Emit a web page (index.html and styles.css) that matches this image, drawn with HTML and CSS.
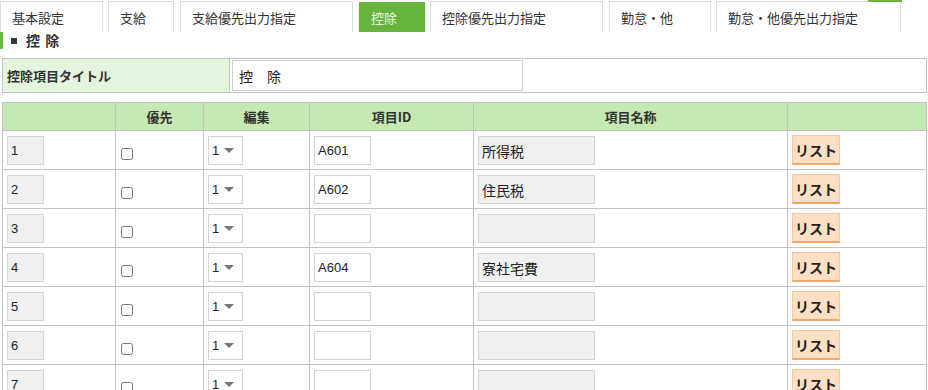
FILE: index.html
```html
<!DOCTYPE html>
<html lang="ja">
<head>
  <meta charset="UTF-8">
  <title>控除</title>
  <link rel="stylesheet" href="styles.css">
</head>
<body>
  <div class="topmark"></div>
  <ul class="tabs">
    <li class="tab t1">基本設定</li>
    <li class="tab t2">支給</li>
    <li class="tab t3">支給優先出力指定</li>
    <li class="tab t4 active">控除</li>
    <li class="tab t5">控除優先出力指定</li>
    <li class="tab t6">勤怠・他</li>
    <li class="tab t7">勤怠・他優先出力指定</li>
  </ul>

  <h2 class="section-title"><span class="square"></span>控 除</h2>

  <table class="title-table">
    <tr>
      <th>控除項目タイトル</th>
      <td><input class="title-input" type="text" value="控　除"></td>
    </tr>
  </table>

  <table class="items">
    <thead>
      <tr>
        <th class="c-no"></th>
        <th class="c-pri">優先</th>
        <th class="c-edit">編集</th>
        <th class="c-id">項目ID</th>
        <th class="c-name">項目名称</th>
        <th class="c-btn"></th>
      </tr>
    </thead>
    <tbody>
      <tr>
        <td><input class="no" type="text" value="1" readonly></td>
        <td><input class="chk" type="checkbox"></td>
        <td><div class="sel"><span>1</span><span class="caret"></span></div></td>
        <td><input class="item-id" type="text" value="A601"></td>
        <td><input class="item-name" type="text" value="所得税" readonly></td>
        <td><button class="btn-list">リスト</button></td>
      </tr>
      <tr>
        <td><input class="no" type="text" value="2" readonly></td>
        <td><input class="chk" type="checkbox"></td>
        <td><div class="sel"><span>1</span><span class="caret"></span></div></td>
        <td><input class="item-id" type="text" value="A602"></td>
        <td><input class="item-name" type="text" value="住民税" readonly></td>
        <td><button class="btn-list">リスト</button></td>
      </tr>
      <tr>
        <td><input class="no" type="text" value="3" readonly></td>
        <td><input class="chk" type="checkbox"></td>
        <td><div class="sel"><span>1</span><span class="caret"></span></div></td>
        <td><input class="item-id" type="text" value=""></td>
        <td><input class="item-name" type="text" value="" readonly></td>
        <td><button class="btn-list">リスト</button></td>
      </tr>
      <tr>
        <td><input class="no" type="text" value="4" readonly></td>
        <td><input class="chk" type="checkbox"></td>
        <td><div class="sel"><span>1</span><span class="caret"></span></div></td>
        <td><input class="item-id" type="text" value="A604"></td>
        <td><input class="item-name" type="text" value="寮社宅費" readonly></td>
        <td><button class="btn-list">リスト</button></td>
      </tr>
      <tr>
        <td><input class="no" type="text" value="5" readonly></td>
        <td><input class="chk" type="checkbox"></td>
        <td><div class="sel"><span>1</span><span class="caret"></span></div></td>
        <td><input class="item-id" type="text" value=""></td>
        <td><input class="item-name" type="text" value="" readonly></td>
        <td><button class="btn-list">リスト</button></td>
      </tr>
      <tr>
        <td><input class="no" type="text" value="6" readonly></td>
        <td><input class="chk" type="checkbox"></td>
        <td><div class="sel"><span>1</span><span class="caret"></span></div></td>
        <td><input class="item-id" type="text" value=""></td>
        <td><input class="item-name" type="text" value="" readonly></td>
        <td><button class="btn-list">リスト</button></td>
      </tr>
      <tr>
        <td><input class="no" type="text" value="7" readonly></td>
        <td><input class="chk" type="checkbox"></td>
        <td><div class="sel"><span>1</span><span class="caret"></span></div></td>
        <td><input class="item-id" type="text" value=""></td>
        <td><input class="item-name" type="text" value="" readonly></td>
        <td><button class="btn-list">リスト</button></td>
      </tr>
    </tbody>
  </table>
</body>
</html>
```

FILE: styles.css
```css
html, body {
  margin: 0;
  padding: 0;
  overflow: hidden;
}
body {
  position: relative;
  width: 928px;
  height: 390px;
  font-family: "Noto Sans CJK JP", "Liberation Sans", sans-serif;
  font-size: 13px;
  color: #333;
  background: #fff;
}
.topmark {
  position: absolute;
  left: 868px;
  top: 0;
  width: 34px;
  height: 2px;
  background: #6cb33f;
}

/* tabs */
.tabs {
  display: flex;
  list-style: none;
  margin: 0;
  padding: 1px 0 0 0;
  height: 31px;
}
.tab {
  box-sizing: border-box;
  height: 31px;
  padding: 7px 0 0 11px;
  border: 1px solid #dcdcdc;
  border-bottom: none;
  line-height: 17px;
  color: #333;
  white-space: nowrap;
}
.t1 { width: 103px; margin-right: 5px; }
.t2 { width: 66px; margin-right: 6px; }
.t3 { width: 173px; margin-right: 6px; }
.t4 { width: 66px; margin-right: 5px; }
.t5 { width: 173px; margin-right: 6px; }
.t6 { width: 102px; margin-right: 5px; }
.t7 { width: 185px; }
.tab.active {
  margin-top: 1px;
  height: 30px;
  padding-top: 6px;
  background: #66b33d;
  border-color: #66b33d;
  color: #eaf5e2;
}

/* section heading */
.section-title {
  display: flex;
  align-items: center;
  margin: 0;
  height: 17px;
  border-left: 3px solid #6cb33f;
  padding-left: 8px;
  font-size: 14px;
  font-weight: bold;
  line-height: 17px;
  color: #333;
  letter-spacing: 1px;
}
.square {
  display: inline-block;
  width: 6px;
  height: 6px;
  background: #3a3340;
  margin-right: 9px;
}

/* title table */
.title-table {
  margin: 9px 0 0 2px;
  width: 925px;
  border-collapse: collapse;
  border: 1px solid #c3c3c3;
}
.title-table th {
  width: 222px;
  height: 32px;
  padding: 0 0 0 4px;
  text-align: left;
  background: #e3f5dc;
  border-right: 1px solid #c3c3c3;
  font-weight: bold;
  font-size: 13px;
}
.title-table td {
  padding: 1px 2px;
}
.title-input {
  box-sizing: border-box;
  display: block;
  width: 291px;
  height: 31px;
  margin: 0;
  padding: 0 6px;
  border: 1px solid #d0d0d0;
  font-family: "Noto Sans CJK JP", sans-serif;
  font-size: 14px;
  color: #222;
  outline: none;
}

/* items table */
.items {
  margin: 9px 0 0 2px;
  width: 925px;
  border-collapse: collapse;
  table-layout: fixed;
}
.items th, .items td {
  border: 1px solid #c3c3c3;
}
.items th {
  height: 27px;
  padding: 0;
  background: #c4e9b1;
  font-weight: bold;
  font-size: 13px;
  color: #333;
  line-height: 16px;
}
.c-no { width: 112px; }
.c-pri { width: 87px; }
.c-edit { width: 105px; }
.c-id { width: 163px; }
.c-name { width: 313px; }
.items td {
  box-sizing: border-box;
  height: 39px;
  padding: 5px 4px 0 4px;
  vertical-align: top;
}
.items input[type="text"] {
  box-sizing: border-box;
  display: block;
  height: 29px;
  margin: 0;
  padding: 0 3px;
  border: 1px solid #d4d4d4;
  font-family: "Liberation Sans", Arial, sans-serif;
  font-size: 13px;
  color: #222;
  outline: none;
}
.items input.no {
  width: 37px;
  background: #f0f0f0;
}
.items input.item-id {
  width: 57px;
  background: #fff;
}
.items input.item-name {
  width: 117px;
  background: #f0f0f0;
  font-family: "Noto Sans CJK JP", sans-serif;
  font-size: 14px;
}
.chk {
  display: block;
  margin: 12px 0 0 1px;
  width: 12px;
  height: 12px;
}
.sel {
  box-sizing: border-box;
  display: flex;
  align-items: center;
  width: 35px;
  height: 29px;
  padding-left: 3px;
  border: 1px solid #d4d4d4;
  font-family: "Liberation Sans", Arial, sans-serif;
  font-size: 13px;
  color: #222;
}
.caret {
  width: 0;
  height: 0;
  margin-left: 5px;
  border-left: 5px solid transparent;
  border-right: 5px solid transparent;
  border-top: 5px solid #777;
}
.btn-list {
  display: block;
  margin: -1px 0 0 0;
  width: 48px;
  height: 30px;
  padding: 0;
  background: #ffe0c4;
  border: 1px solid #f5c9a0;
  border-bottom: 2px solid #f0a76c;
  font-family: "Noto Sans CJK JP", sans-serif;
  font-size: 14px;
  font-weight: bold;
  color: #222;
  cursor: pointer;
}
```
